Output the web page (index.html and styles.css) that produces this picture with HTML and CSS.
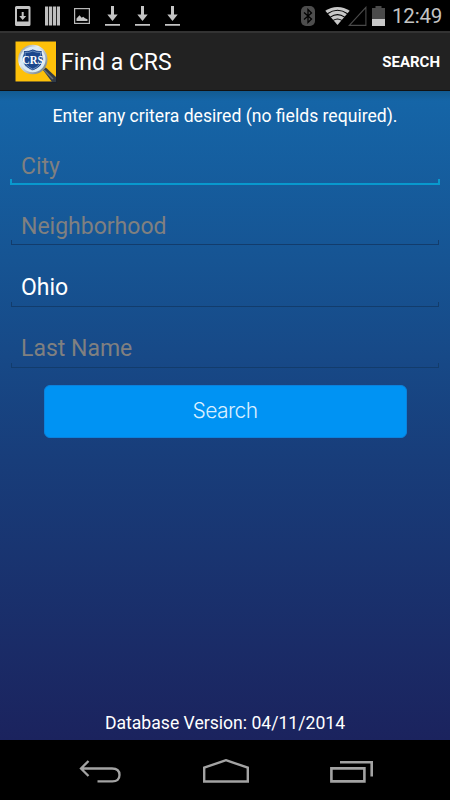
FILE: index.html
```html
<!DOCTYPE html>
<html lang="en">

<head>
    <meta charset="UTF-8">
    <meta name="viewport" content="width=device-width, initial-scale=1.0">
    <title>Find a CRS</title>
    <link rel="stylesheet" href="styles.css">
</head>

<body>
    <div class="status-bar">
        <div class="notifications">
            <svg width="16" height="20" viewBox="0 0 16 20">
                <path fill="#c4c4c4" fill-rule="evenodd" d="M1.5 0h12.5q1.5 0 1.500 1.500v17q0 1.500-1.500 1.500H1.500Q0 20 0 18.500v-17Q0 0 1.500 0zM2 3v12.500h11.500V3z"/>
                <path fill="#c4c4c4" d="M6.700 6h2v4h2.500l-3.500 4-3.500-4h2.500z"/>
            </svg>
            <svg width="15" height="20" viewBox="0 0 15 20">
                <path fill="#c0c0c0" d="M0 .5h3.200v19H0zM4 .5h3.200v19H4zM8 .5h3.200v19H8zM12 .5h3v19h-3z"/>
            </svg>
            <svg width="16" height="20" viewBox="0 0 16 20">
                <rect x=".6" y="2.600" width="14.800" height="14.800" fill="none" stroke="#b8b8b8" stroke-width="1.200"/>
                <path fill="#c4c4c4" d="M2.500 15v-2.500l3-3.300 2.200 2.500 1.500-1 1.800 1.500 2.500 1V15z"/>
            </svg>
            <svg class="download" width="15" height="20" viewBox="0 0 15 20">
                <path fill="#c4c4c4" d="M6 0h3v8.500h3.700L7.500 15 2.300 8.500H6zM0 18h15v1.800H0z"/>
            </svg>
            <svg class="download" width="15" height="20" viewBox="0 0 15 20">
                <path fill="#c4c4c4" d="M6 0h3v8.500h3.700L7.500 15 2.300 8.500H6zM0 18h15v1.800H0z"/>
            </svg>
            <svg class="download" width="15" height="20" viewBox="0 0 15 20">
                <path fill="#c4c4c4" d="M6 0h3v8.500h3.700L7.500 15 2.300 8.500H6zM0 18h15v1.800H0z"/>
            </svg>
        </div>
        <div class="system">
            <svg width="14" height="20" viewBox="0 0 14 20">
                <rect width="14" height="20" rx="5" fill="#4d4d4d"/>
                <path fill="none" stroke="#000" stroke-width="1.300" d="M3 6.500l7.500 6.500L7 16.500v-13L10.500 7 3 13.500"/>
            </svg>
            <svg class="wifi" width="25" height="20" viewBox="0 0 25 20">
                <path fill="#c8c8c8" d="M12.500 19L.3 4.800Q5.700 1 12.500 1t12.200 3.800z"/>
                <path fill="none" stroke="#000" stroke-width="1.100" d="M2.400 7.800q10.100-7.200 20.200 0M5.300 11.100q7.200-5 14.400 0M8.200 14.400q4.300-2.800 8.600 0"/>
            </svg>
            <svg width="19" height="20" viewBox="0 0 19 20">
                <path fill="none" stroke="#4a4a4a" stroke-width="1.100" d="M1.300 19.400L17.900 1.300v18.100z"/>
            </svg>
            <svg class="battery" width="13" height="20" viewBox="0 0 13 20">
                <path fill="#4a4a4a" d="M3.500 0h6v2H13v11H0V2h3.500z"/>
                <path fill="#c8c8c8" d="M0 13h13v7H0z"/>
            </svg>
            <span class="clock">12:49</span>
        </div>
    </div>

    <div class="action-bar">
        <svg class="app-icon" width="42" height="42" viewBox="0 0 42 42">
            <defs>
                <linearGradient id="rim" x1="0" y1="0" x2="1" y2="1">
                    <stop offset="0" stop-color="#7c8790"/>
                    <stop offset=".35" stop-color="#e4edf3"/>
                    <stop offset="1" stop-color="#68747f"/>
                </linearGradient>
            </defs>
            <rect x=".5" y=".5" width="41" height="41" fill="#131a35"/>
            <rect x=".5" y=".5" width="40.500" height="40" fill="#fdc009"/>
            <path d="M28 29l2.800-2.500L41 36v5h-4z" fill="#323b45"/>
            <path d="M29 29l9 9" stroke="#68727c" stroke-width="1.500"/>
            <circle cx="17.800" cy="18.500" r="13.700" fill="#d8eaf5" stroke="url(#rim)" stroke-width="2"/>
            <path d="M17.800 8q5 2.500 9.500 1.500c-1.500 3 2 6 1 10-1.200 5-5 8-10.500 10.300-5.500-2.300-9.300-5.300-10.500-10.300-1-4 2.500-7 1-10q4.500 1 9.500-1.500z" fill="#1b468c" stroke="#fff" stroke-width=".7"/>
            <path d="M17.800 10q4.300 2 7.800 1.500-1 3 1 6-.2 7-8.800 10.700Q9.200 24.500 9 17.500q2-3 1-6 3.500.5 7.800-1.500z" fill="none" stroke="#9bb9d8" stroke-width=".6"/>
            <text x="17.800" y="23" text-anchor="middle" textLength="21.500" lengthAdjust="spacingAndGlyphs" class="logo-text">CRS</text>
        </svg>
        <h1>Find a CRS</h1>
        <span class="action">SEARCH</span>
    </div>

    <main>
        <p class="hint">Enter any critera desired (no fields required).</p>
        <form>
            <div class="field focused"><input type="text" placeholder="City"></div>
            <div class="field"><input type="text" placeholder="Neighborhood"></div>
            <div class="field"><input type="text" value="Ohio"></div>
            <div class="field"><input type="text" placeholder="Last Name"></div>
            <button type="button" class="search-btn">Search</button>
        </form>
        <p class="version">Database Version: 04/11/2014</p>
    </main>

    <div class="nav-bar">
        <svg width="42" height="26" viewBox="0 0 42 26">
            <path d="M9.500 2L2 9.500 9.500 17M2 9.500h31q7.500 0 7.500 6.500t-7.500 6.300H18.500" fill="none" stroke="#a3a3a3" stroke-width="2.300"/>
        </svg>
        <svg width="46" height="26" viewBox="0 0 46 26">
            <path d="M1.200 22.500V8.700L23 1.200l21.800 7.500v13.800z" fill="none" stroke="#a3a3a3" stroke-width="2.400"/>
        </svg>
        <svg width="43" height="26" viewBox="0 0 43 26">
            <path d="M1.400 9.400h33v13h-33zM10 3.200h31.700v14.300" fill="none" stroke="#a3a3a3" stroke-width="2.600"/>
        </svg>
    </div>
</body>

</html>
```
FILE: styles.css
```css
body {
    margin: 0;
    height: 800px;
    display: flex;
    flex-direction: column;
    overflow: hidden;
    background-color: #000;
    color: #fff;
    font-family: Roboto, sans-serif;
}

svg {
    display: block;
    flex: none;
}

.status-bar {
    height: 31px;
    padding: 0 8px 0 15px;
    display: flex;
    justify-content: space-between;
    align-items: center;
    box-sizing: border-box;
}

.notifications,
.system {
    display: flex;
    align-items: center;
    gap: 14px;
}

.notifications .download {
    margin-left: 1px;
}

.system {
    gap: 0;
}

.wifi {
    margin-left: 10px;
    margin-right: -2px;
}

.battery {
    margin-left: 5px;
    margin-right: 7px;
}

.clock {
    width: 50px;
    font-size: 20.5px;
    letter-spacing: -0.2px;
    line-height: 30px;
    color: #c4c4c4;
    white-space: nowrap;
}

.action-bar {
    height: 60px;
    padding: 0 10px 0 15px;
    display: flex;
    align-items: center;
    box-sizing: border-box;
    background-color: #222;
    border-top: 2px solid #333;
    border-bottom: 1px solid #111;
}

.logo-text {
    font-family: "Liberation Serif", serif;
    font-size: 13.5px;
    font-weight: bold;
    fill: #fff;
}

h1 {
    flex: 1;
    margin: 0 0 0 4px;
    padding-top: 2px;
    font-size: 23px;
    font-weight: normal;
    white-space: nowrap;
}

.action {
    font-size: 15px;
    font-weight: bold;
}

main {
    height: 649px;
    padding: 0 10px;
    display: flex;
    flex-direction: column;
    box-sizing: border-box;
    background: linear-gradient(#125b91, #1565a7 10px, #165493 170px, #183d7a 370px, #1b235e 100%);
}

.hint,
.version {
    margin: 0;
    text-align: center;
    white-space: nowrap;
    font-size: 17.6px;
    line-height: 24px;
}

.hint {
    padding-top: 13px;
}

form {
    flex: 1;
    display: flex;
    flex-direction: column;
    padding-top: 10px;
}

/* underline with short ticks at both ends */
.field {
    height: 47px;
    margin: 0 1px 14.3px;
    box-sizing: border-box;
    background:
        linear-gradient(#123c6c, #123c6c) left bottom / 1px 5px no-repeat,
        linear-gradient(#123c6c, #123c6c) right bottom / 1px 5px no-repeat,
        linear-gradient(#123c6c, #123c6c) left bottom / 100% 1px no-repeat;
}

.field.focused {
    margin: 0 0 13.3px;
    padding: 0 1px;
    background:
        linear-gradient(#0899ce, #0899ce) left bottom / 2px 6px no-repeat,
        linear-gradient(#0899ce, #0899ce) right bottom / 2px 6px no-repeat,
        linear-gradient(#0899ce, #0899ce) left bottom / 100% 2px no-repeat;
}

.field input {
    width: 100%;
    height: 47px;
    padding: 9px 10px 0;
    border: none;
    outline: none;
    box-sizing: border-box;
    background: none;
    color: #fff;
    font-family: inherit;
    font-size: 23px;
}

.field input::placeholder {
    color: #808080;
    opacity: 1;
}

.search-btn {
    height: 53px;
    margin: 3px 33.5px 0;
    padding: 0 0 3px;
    border: 1px solid #0b82dc;
    border-radius: 6px;
    background-color: #0093f3;
    color: #d9efff;
    font-family: Inter, "Liberation Sans", sans-serif;
    font-size: 21px;
    font-weight: 300;
    letter-spacing: -0.6px;
}

.version {
    padding-bottom: 5px;
}

.nav-bar {
    height: 60px;
    padding: 3px 77px 0 79px;
    display: flex;
    justify-content: space-between;
    align-items: center;
    box-sizing: border-box;
}
```
